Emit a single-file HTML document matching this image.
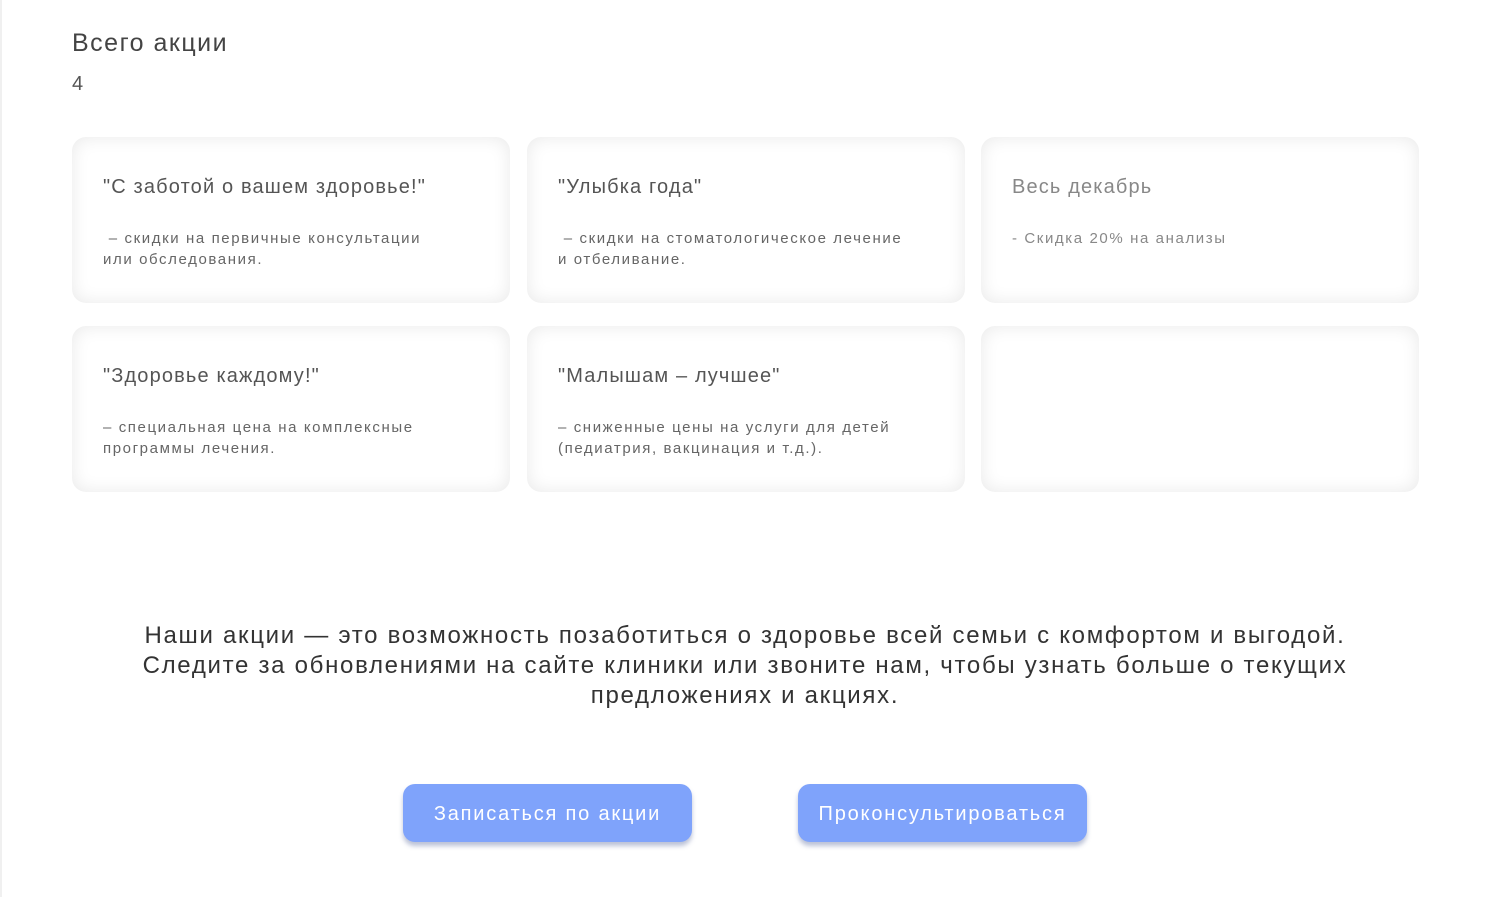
<!DOCTYPE html>
<html><head><meta charset="utf-8"><style>
*{margin:0;padding:0;box-sizing:border-box}
body{width:1488px;height:897px;background:#fff;font-family:"Liberation Sans",sans-serif;color:#333;position:relative;overflow:hidden}
.bl{position:absolute;left:0;top:0;width:2px;height:897px;background:#f0f0f0}
.h{position:absolute;left:72px;top:29px;font-size:25px;color:#444;letter-spacing:1.5px}
.n{position:absolute;left:72px;top:73px;font-size:20px;color:#555}
.card{position:absolute;width:438px;height:166px;border-radius:14px;background:#fff;box-shadow:inset 0 0 18px rgba(0,0,0,0.09)}
.card .t{position:absolute;left:31px;top:39px;font-size:20px;color:#555;letter-spacing:1.15px}
.card .d{position:absolute;left:31px;top:91px;font-size:15px;line-height:21px;color:#666;letter-spacing:1.6px}
.p{position:absolute;left:40px;width:1410px;top:621px;text-align:center;font-size:24px;line-height:30px;color:#333;letter-spacing:1.7px}
.b{position:absolute;top:784px;width:289px;height:58px;border-radius:12px;background:#7fa3fb;color:#fff;font-size:20px;text-align:center;line-height:60px;box-shadow:0 4px 5px rgba(60,80,140,0.35);letter-spacing:1.8px}
</style></head><body>
<div class="bl"></div>
<div class="h">Всего акции</div>
<div class="n">4</div>
<div class="card" style="left:72px;top:137px"><div class="t">"С заботой о вашем здоровье!"</div><div class="d">&nbsp;– скидки на первичные консультации<br>или обследования.</div></div>
<div class="card" style="left:527px;top:137px"><div class="t">"Улыбка года"</div><div class="d">&nbsp;– скидки на стоматологическое лечение<br>и отбеливание.</div></div>
<div class="card" style="left:981px;top:137px"><div class="t" style="color:#888">Весь декабрь</div><div class="d" style="color:#888">- Скидка 20% на анализы</div></div>
<div class="card" style="left:72px;top:326px"><div class="t">"Здоровье каждому!"</div><div class="d">– специальная цена на комплексные<br>программы лечения.</div></div>
<div class="card" style="left:527px;top:326px"><div class="t">"Малышам – лучшее"</div><div class="d">– сниженные цены на услуги для детей<br>(педиатрия, вакцинация и т.д.).</div></div>
<div class="card" style="left:981px;top:326px"></div>
<div class="p">Наши акции — это возможность позаботиться о здоровье всей семьи с комфортом и выгодой.<br>Следите за обновлениями на сайте клиники или звоните нам, чтобы узнать больше о текущих<br>предложениях и акциях.</div>
<div class="b" style="left:403px">Записаться по акции</div>
<div class="b" style="left:798px">Проконсультироваться</div>
</body></html>
